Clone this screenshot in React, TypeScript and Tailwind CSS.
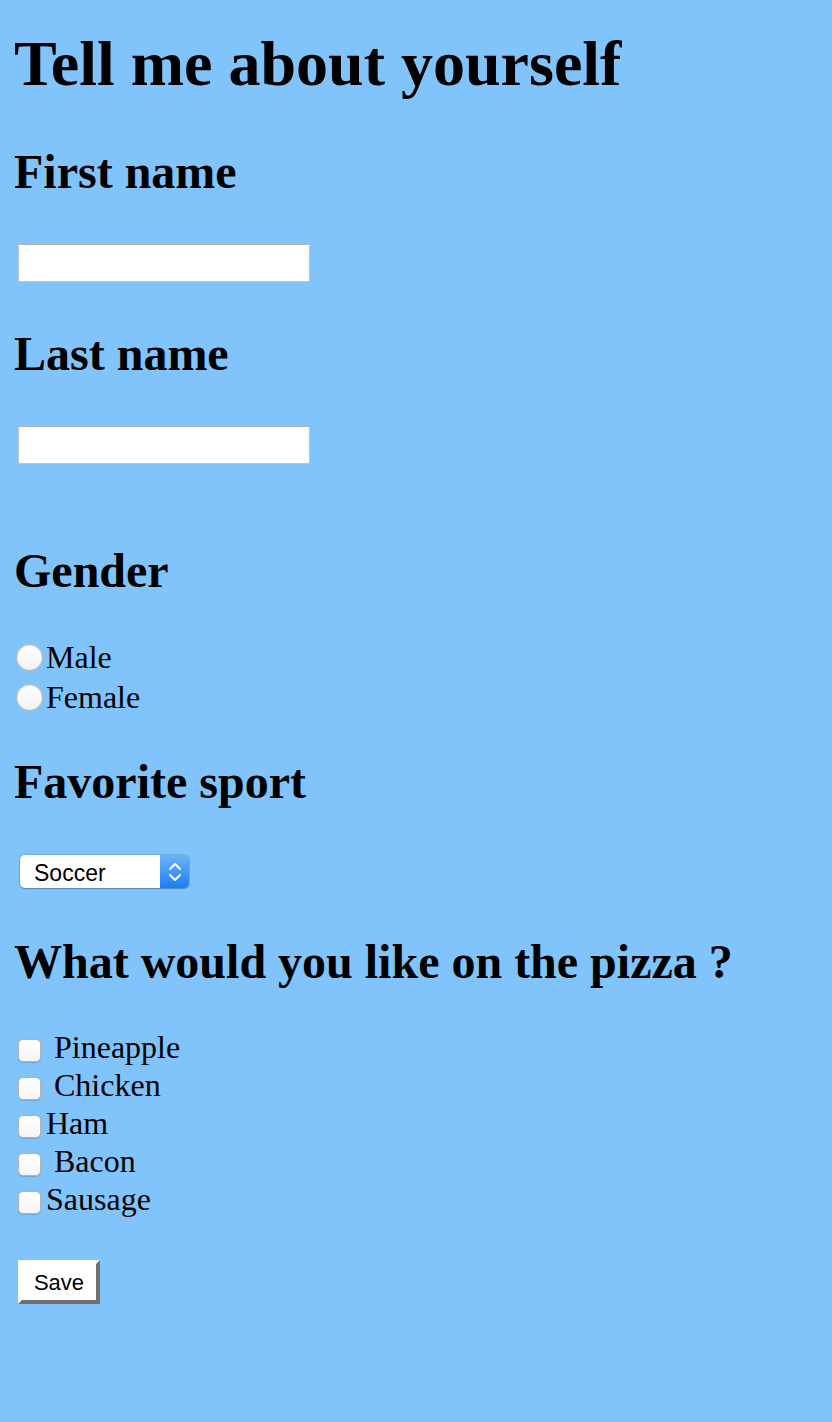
import React from "react";

const sports = ["Soccer", "Basketball", "Tennis", "Swimming"];
const toppings = [
  { label: " Pineapple" },
  { label: " Chicken" },
  { label: "Ham" },
  { label: " Bacon" },
  { label: "Sausage" },
];

function Heading({ children, className = "" }: { children: React.ReactNode; className?: string }) {
  return (
    <h2 className={`pl-[14px] text-[48px] leading-[48px] font-bold whitespace-pre ${className}`}>{children}</h2>
  );
}

function TextField() {
  return (
    <input
      type="text"
      className="ml-[18px] block w-[292px] h-[38px] bg-white border border-[#c3c3c3] border-t-[#b4b4b4] outline-none px-2 text-[26px]"
    />
  );
}

function Radio({ label }: { label: string }) {
  return (
    <label className="flex items-start pl-4 h-[40px]">
      <input
        type="radio"
        name="gender"
        className="appearance-none mt-[7px] w-[27px] h-[27px] rounded-full bg-gradient-to-b from-white to-[#f3f3f3] border border-[#b8b8b8] shadow-[inset_0_1px_1px_rgba(0,0,0,0.08)] shrink-0"
      />
      <span className="ml-[3px] text-[32px] leading-[40px]">{label}</span>
    </label>
  );
}

function Check({ label }: { label: string }) {
  return (
    <label className="flex items-start h-[38px]">
      <input
        type="checkbox"
        className="appearance-none ml-[18px] mt-[11px] w-[23px] h-[23px] rounded-[5px] bg-gradient-to-b from-white to-[#f5f5f5] border border-[#b3b3b3] shadow-[0_0.5px_1px_rgba(0,0,0,0.15)] shrink-0"
      />
      <span className="ml-[5px] text-[32px] leading-[38px] whitespace-pre">{label}</span>
    </label>
  );
}

function SportSelect() {
  return (
    <div className="ml-5 flex w-[169px] h-[33px] rounded-[5px] overflow-hidden shadow-[0_0_0_1px_rgba(0,0,0,0.12),0_1px_1px_rgba(0,0,0,0.2)]">
      <div className="flex-1 bg-white flex items-center pl-[14px] pt-[3px] text-[23px] font-['Liberation_Sans',Arial,sans-serif]">
        {sports[0]}
      </div>
      <div className="w-[29px] bg-gradient-to-b from-[#6cb3fa] to-[#1a7cf4] flex items-center justify-center">
        <svg width="16" height="22" viewBox="0 0 16 22" fill="none" stroke="white" strokeWidth="2" strokeLinecap="round" strokeLinejoin="round">
          <path d="M3 8 L8 3 L13 8" />
          <path d="M3 14 L8 19 L13 14" />
        </svg>
      </div>
    </div>
  );
}

export default function App() {
  return (
    <div className="min-h-screen bg-[#81c4fb] text-black font-['Liberation_Serif','Times_New_Roman',serif] flex flex-col items-start">
      <h1 className="mt-[32px] pl-[14px] text-[64px] leading-[64px] font-bold">Tell me about yourself</h1>

      <Heading className="mt-[52px]">First name</Heading>
      <div className="mt-[48px]">
        <TextField />
      </div>

      <Heading className="mt-[48px]">Last name</Heading>
      <div className="mt-[48px]">
        <TextField />
      </div>

      <Heading className="mt-[83px]">Gender</Heading>
      <div className="mt-[42px] flex flex-col">
        <Radio label="Male" />
        <Radio label="Female" />
      </div>

      <Heading className="mt-[41px]">Favorite sport</Heading>
      <div className="mt-[49px]">
        <SportSelect />
      </div>

      <Heading className="mt-[50px]">What would you like on the pizza ?</Heading>
      <div className="mt-[42px] flex flex-col">
        {toppings.map((t) => (
          <Check key={t.label} label={t.label} />
        ))}
      </div>

      <button
        type="button"
        className="mt-[42px] ml-[18px] w-[82px] h-[44px] bg-white border-4 border-t-white border-l-white border-r-[#6f6f6f] border-b-[#6f6f6f] text-[22px] font-['Liberation_Sans',Arial,sans-serif] flex items-center justify-center"
      >
        Save
      </button>
    </div>
  );
}
